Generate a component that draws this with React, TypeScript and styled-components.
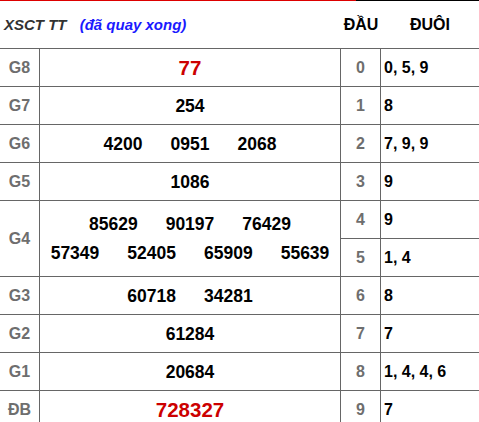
import styled, { createGlobalStyle } from "styled-components";

type Prize = {
  label: string;
  lines: string[][];
  special?: boolean;
  span?: number;
};

const prizes: Prize[] = [
  { label: "G8", lines: [["77"]], special: true },
  { label: "G7", lines: [["254"]] },
  { label: "G6", lines: [["4200", "0951", "2068"]] },
  { label: "G5", lines: [["1086"]] },
  {
    label: "G4",
    lines: [
      ["85629", "90197", "76429"],
      ["57349", "52405", "65909", "55639"],
    ],
    span: 2,
  },
  { label: "G3", lines: [["60718", "34281"]] },
  { label: "G2", lines: [["61284"]] },
  { label: "G1", lines: [["20684"]] },
  { label: "ĐB", lines: [["728327"]], special: true },
];

const loto = [
  ["0", "0, 5, 9"],
  ["1", "8"],
  ["2", "7, 9, 9"],
  ["3", "9"],
  ["4", "9"],
  ["5", "1, 4"],
  ["6", "8"],
  ["7", "7"],
  ["8", "1, 4, 4, 6"],
  ["9", "7"],
];

const App = () => {
  const cells: React.ReactNode[] = [];
  let p = 0;
  let covered = 0;
  loto.forEach(([head, tail], i) => {
    if (covered === 0) {
      const prize = prizes[p++];
      const span = prize.span ?? 1;
      covered = span;
      cells.push(
        <Label key={`l${i}`} $span={span}>
          {prize.label}
        </Label>,
        <Numbers key={`n${i}`} $span={span}>
          {prize.lines.map((line, j) => (
            <NumLine key={j}>
              {line.map((n) => (
                <Num key={n} $special={prize.special}>
                  {n}
                </Num>
              ))}
            </NumLine>
          ))}
        </Numbers>
      );
    }
    covered--;
    cells.push(
      <Head key={`h${i}`}>{head}</Head>,
      <Tail key={`t${i}`}>{tail}</Tail>
    );
  });

  return (
    <>
      <GlobalStyle />
      <Wrap>
        <TopRule>
          <span />
          <span />
        </TopRule>
        <Board>
          <Title>
            XSCT TT <Status>(đã quay xong)</Status>
          </Title>
          <ColHead>ĐẦU</ColHead>
          <ColHead>ĐUÔI</ColHead>
          {cells}
        </Board>
      </Wrap>
    </>
  );
};

export default App;

const GlobalStyle = createGlobalStyle`
  body {
    margin: 0;
    background: #fff;
    font-family: "Liberation Sans", Arial, sans-serif;
  }
`;

const Wrap = styled.div`
  width: 479px;
  overflow: hidden;
`;

const TopRule = styled.div`
  display: flex;
  height: 1px;
  > span:first-child {
    width: 356px;
    background: #dd0000;
  }
  > span:last-child {
    flex: 1;
    background: #000;
  }
`;

const Board = styled.div`
  display: grid;
  grid-template-columns: 40px 301px 40px 1fr;
  grid-template-rows: 48px;
  grid-auto-rows: 38px;
  > div {
    box-sizing: border-box;
    border-bottom: 1px solid #666;
  }
`;

const Title = styled.div`
  grid-column: span 2;
  display: flex;
  align-items: center;
  padding-left: 4px;
  font-size: 15px;
  font-weight: bold;
  font-style: italic;
  color: #333;
  white-space: pre;
`;

const Status = styled.span`
  margin-left: 9px;
  color: #1a1aff;
`;

const ColHead = styled.div`
  display: flex;
  align-items: center;
  justify-content: center;
  font-size: 16px;
  font-weight: bold;
  color: #000;
`;

const Label = styled.div<{ $span: number }>`
  grid-row: span ${(p) => p.$span};
  display: flex;
  align-items: center;
  justify-content: center;
  border-right: 1px solid #666;
  font-size: 16px;
  font-weight: bold;
  color: #6e6e6e;
`;

const Numbers = styled.div<{ $span: number }>`
  grid-row: span ${(p) => p.$span};
  display: flex;
  flex-direction: column;
  justify-content: center;
  gap: 11px;
  border-right: 1px solid #666;
`;

const NumLine = styled.div`
  display: flex;
  justify-content: center;
  gap: 28px;
`;

const Num = styled.span<{ $special?: boolean }>`
  font-size: ${(p) => (p.$special ? "20.5px" : "17.5px")};
  font-weight: bold;
  color: ${(p) => (p.$special ? "#cc0000" : "#000")};
  line-height: 18px;
`;

const Head = styled.div`
  display: flex;
  align-items: center;
  justify-content: center;
  border-right: 1px solid #666;
  font-size: 16px;
  font-weight: bold;
  color: #6e6e6e;
`;

const Tail = styled.div`
  display: flex;
  align-items: center;
  padding-left: 3px;
  font-size: 16px;
  font-weight: bold;
  color: #000;
`;
